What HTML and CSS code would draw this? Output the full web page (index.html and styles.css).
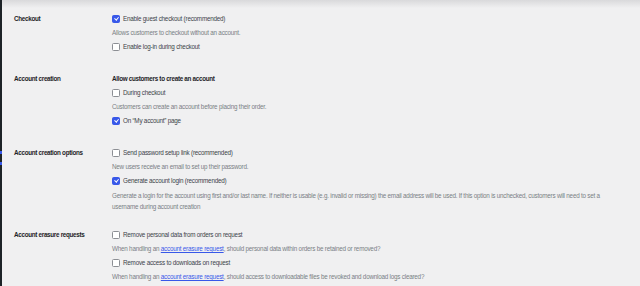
FILE: index.html
```html
<!DOCTYPE html>
<html>
<head>
<meta charset="utf-8">
<link rel="stylesheet" href="styles.css">
</head>
<body>
<div class="page">
  <div class="adminbar"><span class="mark m1"></span><span class="mark m2"></span></div>
  <div class="content">
    <div class="row">
      <div class="label">Checkout</div>
      <div class="field">
        <div class="opt"><span class="cb checked"></span>Enable guest checkout (recommended)</div>
        <div class="desc">Allows customers to checkout without an account.</div>
        <div class="opt gap"><span class="cb"></span>Enable log-in during checkout</div>
      </div>
    </div>
    <div class="row">
      <div class="label">Account creation</div>
      <div class="field">
        <div class="opt heading">Allow customers to create an account</div>
        <div class="opt gap"><span class="cb"></span>During checkout</div>
        <div class="desc">Customers can create an account before placing their order.</div>
        <div class="opt gap"><span class="cb checked"></span>On “My account” page</div>
      </div>
    </div>
    <div class="row">
      <div class="label">Account creation options</div>
      <div class="field">
        <div class="opt"><span class="cb"></span>Send password setup link (recommended)</div>
        <div class="desc">New users receive an email to set up their password.</div>
        <div class="opt gap"><span class="cb checked"></span>Generate account login (recommended)</div>
        <div class="desc wide">Generate a login for the account using first and/or last name. If neither is usable (e.g. invalid or missing) the email address will be used. If this option is unchecked, customers will need to set a username during account creation</div>
      </div>
    </div>
    <div class="row last">
      <div class="label">Account erasure requests</div>
      <div class="field">
        <div class="opt"><span class="cb"></span>Remove personal data from orders on request</div>
        <div class="desc">When handling an <a href="#">account erasure request</a>, should personal data within orders be retained or removed?</div>
        <div class="opt gap"><span class="cb"></span>Remove access to downloads on request</div>
        <div class="desc">When handling an <a href="#">account erasure request</a>, should access to downloadable files be revoked and download logs cleared?</div>
      </div>
    </div>
  </div>
</div>
</body>
</html>
```
FILE: styles.css
```css
html, body { margin: 0; padding: 0; }
body {
  background: #f0f0f1;
  font-family: "Liberation Sans", Arial, sans-serif;
  font-size: 6.3px;
  letter-spacing: -0.22px;
  color: #1d2327;
  width: 640px;
  height: 286px;
  overflow: hidden;
}
.page { display: flex; height: 286px; }
.adminbar {
  width: 2px;
  flex: none;
  background: #1d2327;
  position: relative;
}
.mark { position: absolute; left: 0; width: 2px; height: 3px; background: #3858e9; }
.m1 { top: 151px; }
.m2 { top: 162px; }
.content {
  flex: 1;
  background: linear-gradient(#d9d9db, #f0f0f1 8px);
  padding-left: 12px;
}
.row { display: flex; padding: 14px 0 8px; }
.row.last { padding-top: 10px; }
.label {
  width: 98px;
  flex: none;
  font-weight: bold;
  letter-spacing: -0.3px;
  line-height: 10px;
  color: #1d2327;
}
.field { flex: 1; }
.opt { display: flex; align-items: center; height: 10px; line-height: 10px; color: #3c434a; }
.opt.gap { margin-top: 4px; }
.heading { font-weight: bold; letter-spacing: -0.3px; color: #1d2327; }
.cb {
  width: 6px; height: 6px;
  border: 1px solid #8c8f94;
  border-radius: 1.5px;
  background: #fff;
  margin-right: 3px;
  flex: none;
  position: relative;
}
.cb.checked { background: #3858e9; border-color: #3858e9; }
.cb.checked::after {
  content: "";
  position: absolute;
  left: 1.6px; top: 0.3px;
  width: 1.6px; height: 3.3px;
  border: solid #fff;
  border-width: 0 1px 1px 0;
  transform: rotate(40deg);
}
.desc { margin-top: 3px; line-height: 11px; color: #7a7f85; }
.desc.wide { margin-top: 4px; max-width: 500px; }
.desc a { color: #3858e9; text-decoration: underline; }
```
